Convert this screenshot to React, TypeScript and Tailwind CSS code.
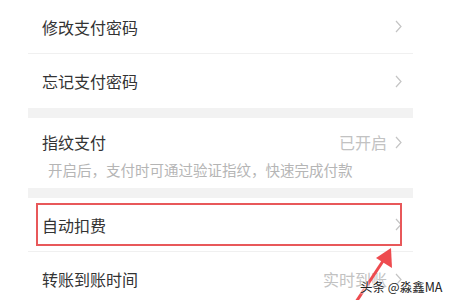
const font = { fontFamily: '"Noto Sans CJK SC", "Noto Sans", sans-serif' };

const Chevron = ({ className = "" }: { className?: string }) => (
  <svg width="7" height="13" viewBox="0 0 7 13" className={className}>
    <path d="M1 1l5 5.5L1 12" fill="none" stroke="#c4c4c4" strokeWidth="1.2" />
  </svg>
);

const Row = ({ title, value, line = true }: { title: string; value?: string; line?: boolean }) => (
  <div className={`flex h-[54px] items-center justify-between pl-[14px] pr-[11px] ${line ? "border-b border-[#f0f0f0]" : ""}`}>
    <span className="text-[16px] text-[#333]">{title}</span>
    <div className="flex items-center gap-[8px]">
      {value && <span className="text-[16px] text-[#c2c2c2]">{value}</span>}
      <Chevron />
    </div>
  </div>
);

export default function App() {
  return (
    <div className="relative h-[300px] w-[450px] overflow-hidden bg-white" style={font}>
      <div className="ml-[28px] w-[385px]">
        <Row title="修改支付密码" />
        <Row title="忘记支付密码" line={false} />
        <div className="h-[10px] bg-[#f2f2f2]" />
        <div className="h-[70px] pl-[14px] pr-[11px] pt-[12px]">
          <div className="flex items-center justify-between">
            <span className="text-[16px] text-[#333]">指纹支付</span>
            <div className="flex items-center gap-[8px]">
              <span className="text-[16px] text-[#c2c2c2]">已开启</span>
              <Chevron />
            </div>
          </div>
          <p className="mt-[5px] pl-[6px] text-[14.5px] text-[#b5b5b5]">开启后，支付时可通过验证指纹，快速完成付款</p>
        </div>
        <div className="h-[10px] bg-[#f2f2f2]" />
        <Row title="自动扣费" />
        <Row title="转账到账时间" value="实时到账" line={false} />
      </div>

      {/* annotation */}
      <div className="absolute left-[36px] top-[203px] h-[43px] w-[366px] border-2 border-[#e8585a]" />
      <svg className="absolute left-0 top-0" width="450" height="300">
        <line x1="356" y1="302" x2="385" y2="258" stroke="#ee4b4f" strokeWidth="3" />
        <polygon points="391,248 392,268 376,258" fill="#ee4b4f" />
      </svg>
      <span
        className="absolute left-[360px] top-[278px] text-[12.5px] text-[#222]"
        style={{ textShadow: "0 0 2px #fff, 0 0 2px #fff, 0 0 3px #fff" }}
      >
        头条 @淼鑫MA
      </span>
    </div>
  );
}
